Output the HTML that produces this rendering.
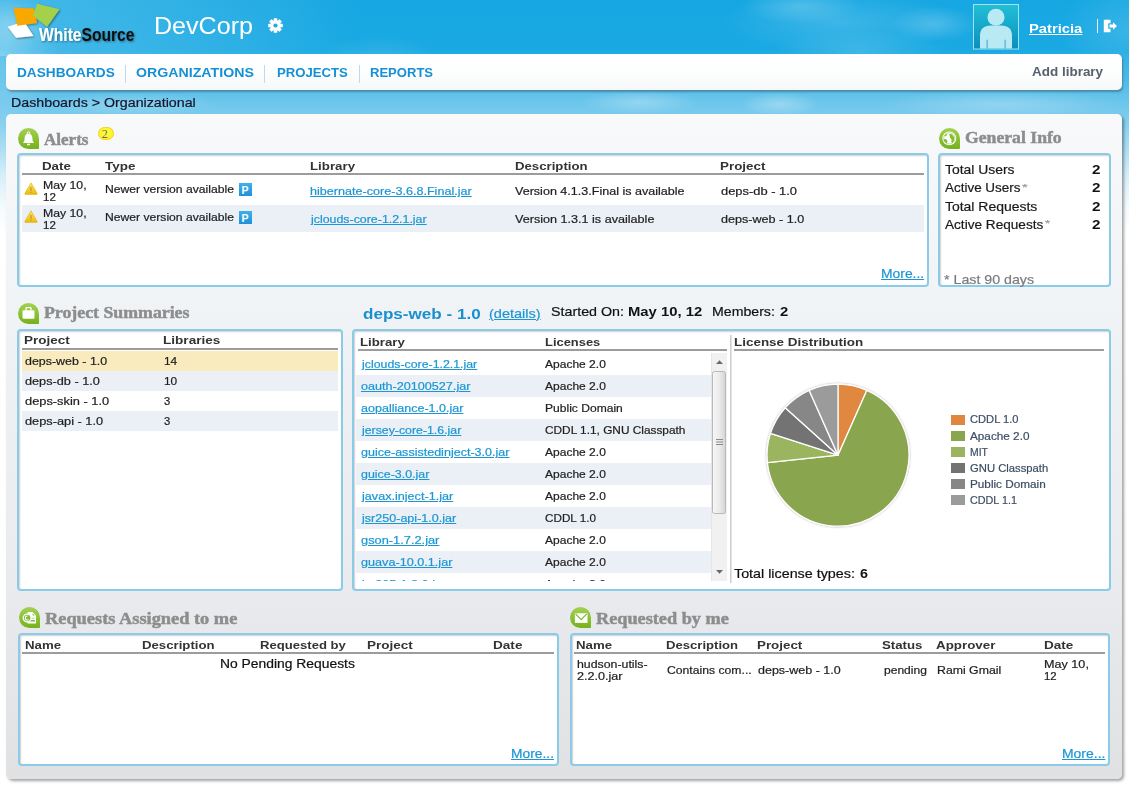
<!DOCTYPE html>
<html><head><meta charset="utf-8">
<style>
html,body{margin:0;padding:0;}
body{width:1129px;height:788px;overflow:hidden;position:relative;background:#fff;font-family:"Liberation Sans",sans-serif;}
#sky{position:absolute;left:0;top:0;width:1129px;height:260px;
 background:
  radial-gradient(ellipse 120px 32px at 840px 22px, rgba(255,255,255,.16), rgba(255,255,255,0) 100%),
  radial-gradient(ellipse 60px 18px at 800px 6px, rgba(255,255,255,.2), rgba(255,255,255,0) 100%),
  radial-gradient(ellipse 45px 18px at 935px 24px, rgba(255,255,255,.2), rgba(255,255,255,0) 100%),
  radial-gradient(ellipse 90px 22px at 860px 52px, rgba(255,255,255,.14), rgba(255,255,255,0) 100%),
  radial-gradient(ellipse 70px 50px at 1129px 30px, rgba(255,255,255,.14), rgba(255,255,255,0) 100%),
  radial-gradient(ellipse 60px 70px at 0px 55px, rgba(255,255,255,.3), rgba(255,255,255,0) 100%),
  radial-gradient(ellipse 40px 25px at 10px 25px, rgba(255,255,255,.2), rgba(255,255,255,0) 100%),
  radial-gradient(ellipse 60px 25px at 380px 60px, rgba(255,255,255,.12), rgba(255,255,255,0) 100%),
  radial-gradient(ellipse 90px 12px at 130px 104px, rgba(255,255,255,.22), rgba(255,255,255,0) 100%),
  radial-gradient(ellipse 60px 12px at 640px 102px, rgba(255,255,255,.28), rgba(255,255,255,0) 100%),
  radial-gradient(ellipse 40px 12px at 780px 104px, rgba(255,255,255,.3), rgba(255,255,255,0) 100%),
  radial-gradient(ellipse 120px 14px at 1000px 104px, rgba(255,255,255,.25), rgba(255,255,255,0) 100%),
  linear-gradient(to bottom,#16a7e2 0px,#1aa9e3 50px,#3db5e6 70px,#5ec0ea 92px,#7acbed 114px,#a6dcf2 145px,#d6eef9 175px,#f3fafd 205px,#ffffff 235px);}
.t{position:absolute;white-space:nowrap;transform-origin:0 0;}
.r{position:absolute;}
#panel{position:absolute;left:6px;top:114px;width:1116px;height:665px;border-radius:5px;
 background:linear-gradient(to bottom,#f7f9fa 0%,#eff2f5 35%,#e9ebee 70%,#e0e1e3 100%);
 box-shadow:2px 2px 3px rgba(0,0,0,.36);}
.box{position:absolute;box-sizing:border-box;border:2px solid #8acbe8;border-radius:4px;background:#fff;
 box-shadow:inset 1px 1px 1.5px rgba(90,60,60,.25);}
#nav{position:absolute;left:6px;top:54px;width:1116px;height:36px;border-radius:5px;
 background:linear-gradient(to bottom,#ffffff 0%,#fcfdfd 60%,#f5f7f9 100%);box-shadow:1px 2px 2px rgba(40,40,40,.35);}
.sep{position:absolute;top:65px;width:1px;height:18px;background:#b9dcef;}
.icon{position:absolute;width:21px;height:21px;border-radius:10.5px 10.5px 1px 10.5px;
 background:linear-gradient(to bottom,#a3d152 0%,#8cc236 50%,#76b11c 100%);}
.icon svg{position:absolute;left:0;top:0;}
</style></head><body>
<div id="sky"></div>
<div style="position:absolute;left:0;top:0;width:1129px;height:56px;background:linear-gradient(to right,rgba(255,255,255,.2) 0px,rgba(255,255,255,.13) 150px,rgba(255,255,255,.07) 260px,rgba(255,255,255,0) 360px)"></div>

<!-- logo -->
<svg style="position:absolute;left:0;top:0" width="150" height="50">
 <defs><filter id="sh" x="-20%" y="-20%" width="140%" height="140%"><feGaussianBlur in="SourceAlpha" stdDeviation="1"/><feOffset dx="1" dy="1"/><feComponentTransfer><feFuncA type="linear" slope=".45"/></feComponentTransfer><feMerge><feMergeNode/><feMergeNode in="SourceGraphic"/></feMerge></filter></defs>
 <g filter="url(#sh)">
 <polygon points="7.7,26.7 24,21.5 33.5,36 16.1,37.8" fill="#ffffff"/>
 <polygon points="13.4,7.7 34.1,8.4 37,22.9 17.4,25.8" fill="#f9a800"/>
 <polygon points="37.2,3.7 59.5,9.3 47.1,26.7 32.9,15.5" fill="#a6d04a"/>
 <text x="39" y="41" font-family="Liberation Sans" font-size="17.5" font-weight="700" textLength="95.5" lengthAdjust="spacingAndGlyphs"><tspan fill="#ffffff">White</tspan><tspan fill="#111111">Source</tspan></text>
 </g>
</svg>

<!-- gear -->
<svg style="position:absolute;left:267px;top:17px" width="17" height="17" viewBox="0 0 17 17">
 <g transform="translate(8.5,8.5)" fill="#fff">
  <circle r="5.2"/>
  <rect x="-1.8" y="-7.3" width="3.6" height="14.6" rx=".6"/>
  <rect x="-1.8" y="-7.3" width="3.6" height="14.6" rx=".6" transform="rotate(45)"/>
  <rect x="-1.8" y="-7.3" width="3.6" height="14.6" rx=".6" transform="rotate(90)"/>
  <rect x="-1.8" y="-7.3" width="3.6" height="14.6" rx=".6" transform="rotate(135)"/>
  <circle r="2.1" fill="#28a6e0"/>
 </g>
</svg>

<!-- avatar -->
<svg style="position:absolute;left:973px;top:4px" width="46" height="46" viewBox="0 0 46 46">
 <defs><linearGradient id="av" x1="0" y1="0" x2="0" y2="1"><stop offset="0" stop-color="#22bfd6"/><stop offset="1" stop-color="#0b8ebd"/></linearGradient></defs>
 <rect x="0.5" y="0.5" width="45" height="44.5" fill="url(#av)" stroke="#9fe3f0" stroke-width="1"/>
 <circle cx="23" cy="13.2" r="8.5" fill="#b9eaf4"/>
 <path d="M7,44.5 L7,32 Q7,21.5 18,21.5 L28,21.5 Q39,21.5 39,32 L39,44.5 Z" fill="#b9eaf4"/>
 <rect x="13.6" y="35.7" width="1" height="8.8" fill="#3aa7c4"/>
 <rect x="31.6" y="35.7" width="1" height="8.8" fill="#3aa7c4"/>
</svg>
<div class="r" style="left:1097px;top:19px;width:1px;height:14px;background:rgba(255,255,255,.85)"></div>
<!-- logout -->
<svg style="position:absolute;left:1103px;top:19px" width="15" height="14" viewBox="0 0 15 14">
 <path d="M0.8,0.8 L7.5,0.8 L7.5,4.2 L5.2,4.2 L5.2,9.8 L7.5,9.8 L7.5,13.2 L0.8,13.2 Z" fill="#fff"/>
 <path d="M6.5,5.6 L10,5.6 L10,3.2 L14,7 L10,10.8 L10,8.4 L6.5,8.4 Z" fill="#fff"/>
</svg>

<div id="nav"></div>
<div class="sep" style="left:125px"></div>
<div class="sep" style="left:264px"></div>
<div class="sep" style="left:359px"></div>

<div id="panel"></div>
<div class="box" style="left:17px;top:153.3px;width:912px;height:133.89999999999998px"></div>
<div class="box" style="left:937.6px;top:153.3px;width:173.69999999999993px;height:133.89999999999998px"></div>
<div class="box" style="left:17.3px;top:329px;width:325.7px;height:261.5px"></div>
<div class="box" style="left:351.7px;top:329px;width:759.5px;height:261.5px"></div>
<div class="box" style="left:18px;top:632.7px;width:540.8px;height:133.0px"></div>
<div class="box" style="left:569.7px;top:632.7px;width:540.5px;height:133.0px"></div>
<div class="r" style="left:22px;top:173px;width:902px;height:2px;background:#9a9ca0;"></div>
<div class="r" style="left:22px;top:204.5px;width:902px;height:27.5px;background:#ebf0f6;"></div>
<div class="r" style="left:22px;top:348px;width:316px;height:2px;background:#9a9ca0;"></div>
<div class="r" style="left:22px;top:351px;width:316px;height:20px;background:#f9ebbe;"></div>
<div class="r" style="left:22px;top:371px;width:316px;height:20px;background:#ebf0f6;"></div>
<div class="r" style="left:22px;top:411px;width:316px;height:20px;background:#ebf0f6;"></div>
<div class="r" style="left:357.5px;top:349px;width:369.5px;height:2px;background:#9a9ca0;"></div>
<div class="r" style="left:356px;top:375px;width:355px;height:22px;background:#ebf0f6;"></div>
<div class="r" style="left:356px;top:419px;width:355px;height:22px;background:#ebf0f6;"></div>
<div class="r" style="left:356px;top:463px;width:355px;height:22px;background:#ebf0f6;"></div>
<div class="r" style="left:356px;top:507px;width:355px;height:22px;background:#ebf0f6;"></div>
<div class="r" style="left:356px;top:551px;width:355px;height:22px;background:#ebf0f6;"></div>
<div class="r" style="left:734px;top:348.5px;width:370px;height:2.0px;background:#9a9ca0;"></div>
<div class="r" style="left:730px;top:335px;width:2px;height:248px;background:#e2e2e2;border-left:1px solid #cfcfcf;box-sizing:border-box"></div>
<div class="r" style="left:22px;top:652px;width:532px;height:2px;background:#9a9ca0;"></div>
<div class="r" style="left:574px;top:652px;width:531px;height:2px;background:#9a9ca0;"></div>

<!-- section icons -->
<div class="icon" style="left:18px;top:127.5px">
 <svg width="21" height="21" viewBox="0 0 21 21"><circle cx="10.5" cy="5.2" r="1.3" fill="none" stroke="#fff" stroke-width="1"/><path d="M10.5,5.8 Q14.3,6 14.4,10 L14.6,12.8 L16,15 L5,15 L6.4,12.8 L6.6,10 Q6.7,6 10.5,5.8 Z" fill="#fff"/><ellipse cx="10.5" cy="16.4" rx="1.6" ry="0.9" fill="#fff"/></svg>
</div>
<div class="icon" style="left:938.5px;top:127.5px">
 <svg width="21" height="21" viewBox="0 0 21 21"><circle cx="10.3" cy="10.4" r="6.9" fill="#fff"/><circle cx="10.3" cy="10.4" r="5.6" fill="none" stroke="#9ccf5a" stroke-width=".7"/><path d="M10.2,5.9 L12.8,6.2 L15.2,9.2 L15,12.4 L13.4,15 L12.2,14 L12.6,11.6 L11.2,10.1 L10.7,8 Z" fill="#83bd2c"/><path d="M4.9,11.2 L7,11 L8.4,13 L8.1,15.3 L6.2,14.6 L4.9,12.6 Z" fill="#83bd2c"/><path d="M5.4,7.6 L7.6,5.5 L8.1,6.7 L6.5,8.6 Z" fill="#8fc43a"/></svg>
</div>
<div class="icon" style="left:17.5px;top:302.5px">
 <svg width="21" height="21" viewBox="0 0 21 21"><rect x="4.5" y="7.2" width="12" height="8.5" rx="1" fill="#fff"/><path d="M8,7.4 L8,5.3 Q8,4.6 8.7,4.6 L12.3,4.6 Q13,4.6 13,5.3 L13,7.4" fill="none" stroke="#fff" stroke-width="1.3"/></svg>
</div>
<div class="icon" style="left:18.5px;top:606.5px">
 <svg width="21" height="21" viewBox="0 0 21 21"><path d="M8.5,5 L13.5,5 L17,8.5 L17,16.5 L8.5,16.5 Z" fill="#fff"/><path d="M13.6,6.2 L15.8,8.4 L13.6,8.4 Z" fill="#7dbb38"/><rect x="11" y="10.8" width="4.5" height="1" fill="#a5d27a"/><rect x="10.5" y="13" width="5.5" height="1.5" fill="#7dbb38"/><circle cx="8.2" cy="11" r="3.9" fill="#7dbb38" stroke="#fff" stroke-width="1.4"/><path d="M8.6,9 A2,2 0 1 0 9.6,12.6" fill="none" stroke="#fff" stroke-width="1.1"/></svg>
</div>
<div class="icon" style="left:570px;top:606.5px">
 <svg width="21" height="21" viewBox="0 0 21 21"><rect x="4.9" y="6.3" width="12.6" height="9.6" fill="#fff"/><path d="M5.6,6.9 L11.2,12.6 L16.8,6.9" fill="none" stroke="#7dbb38" stroke-width="1.3"/></svg>
</div>

<!-- badge -->
<div class="r" style="left:97.5px;top:127px;width:16.5px;height:13px;border-radius:8px;box-sizing:border-box;background:radial-gradient(ellipse at 50% 40%,#ffff40 0%,#fdf22a 70%,#f2d518 100%);border:1px solid #f0d31a;"></div>
<span class="t" style="left:101.8px;top:126.5px;font-size:12px;line-height:14px;color:#6d6a55;font-family:'Liberation Serif',serif;">2</span>

<!-- warning icons -->
<svg style="position:absolute;left:24px;top:182px" width="14" height="13" viewBox="0 0 14 13"><defs><linearGradient id="wg" x1="0" y1="0" x2="0" y2="1"><stop offset="0" stop-color="#fbe46a"/><stop offset=".6" stop-color="#f5cc2a"/><stop offset="1" stop-color="#ebb913"/></linearGradient></defs><path d="M7,0.8 L13.2,11.6 Q13.4,12.4 12.6,12.4 L1.4,12.4 Q0.6,12.4 0.8,11.6 Z" fill="url(#wg)" stroke="#e2b10c" stroke-width=".6"/><rect x="6.4" y="5" width="1.2" height="4" fill="#b59a40"/><rect x="6.4" y="9.8" width="1.2" height="1.1" fill="#b59a40"/></svg>
<svg style="position:absolute;left:24px;top:210px" width="14" height="13" viewBox="0 0 14 13"><path d="M7,0.8 L13.2,11.6 Q13.4,12.4 12.6,12.4 L1.4,12.4 Q0.6,12.4 0.8,11.6 Z" fill="url(#wg)" stroke="#e2b10c" stroke-width=".6"/><rect x="6.4" y="5" width="1.2" height="4" fill="#b59a40"/><rect x="6.4" y="9.8" width="1.2" height="1.1" fill="#b59a40"/></svg>

<!-- P badges -->
<div class="r" style="left:238.5px;top:183px;width:13px;height:12.5px;background:linear-gradient(#3eb0ec,#1e92d8);"></div>
<span class="t" style="left:241.6px;top:183.5px;font-size:10.5px;line-height:12px;color:#fff;font-weight:700;">P</span>
<div class="r" style="left:238.5px;top:211px;width:13px;height:12.5px;background:linear-gradient(#3eb0ec,#1e92d8);"></div>
<span class="t" style="left:241.6px;top:211.5px;font-size:10.5px;line-height:12px;color:#fff;font-weight:700;">P</span>

<!-- general info asterisks -->

<!-- scrollbar -->
<div class="r" style="left:711px;top:353px;width:16px;height:228px;background:#f1f1f1;border-left:1px solid #e6e6e6;box-sizing:border-box"></div>
<svg style="position:absolute;left:711px;top:353px" width="16" height="228" viewBox="0 0 16 228">
 <path d="M5,11 L8.5,7.3 L12,11 Z" fill="#6a6a6a"/>
 <path d="M5,217 L8.5,220.7 L12,217 Z" fill="#6a6a6a"/>
 <defs><linearGradient id="th" x1="0" y1="0" x2="1" y2="0"><stop offset="0" stop-color="#f7f7f7"/><stop offset=".5" stop-color="#ececec"/><stop offset="1" stop-color="#d4d4d8"/></linearGradient></defs>
 <rect x="1.5" y="18.5" width="13" height="142" rx="2" fill="url(#th)" stroke="#b9b9bb"/>
 <rect x="5" y="86" width="7" height="1" fill="#8a8a8a"/>
 <rect x="5" y="88.5" width="7" height="1" fill="#8a8a8a"/>
 <rect x="5" y="91" width="7" height="1" fill="#8a8a8a"/>
</svg>

<!-- pie -->
<svg style="position:absolute;left:0;top:0" width="1129" height="788">
 <defs><filter id="psh" x="-10%" y="-10%" width="120%" height="120%"><feGaussianBlur in="SourceAlpha" stdDeviation="0.8"/><feComponentTransfer><feFuncA type="linear" slope=".35"/></feComponentTransfer><feMerge><feMergeNode/><feMergeNode in="SourceGraphic"/></feMerge></filter></defs>
 <g filter="url(#psh)">
<path d="M838,455.2 L838.00,384.20 A71,71 0 0 1 866.88,390.34 Z" fill="#e0873f" stroke="#fff" stroke-width="1.3" stroke-linejoin="round"/>
<path d="M838,455.2 L866.88,390.34 A71,71 0 1 1 767.39,462.62 Z" fill="#89a54d" stroke="#fff" stroke-width="1.3" stroke-linejoin="round"/>
<path d="M838,455.2 L767.39,462.62 A71,71 0 0 1 770.47,433.26 Z" fill="#9ab460" stroke="#fff" stroke-width="1.3" stroke-linejoin="round"/>
<path d="M838,455.2 L770.47,433.26 A71,71 0 0 1 785.24,407.69 Z" fill="#737373" stroke="#fff" stroke-width="1.3" stroke-linejoin="round"/>
<path d="M838,455.2 L785.24,407.69 A71,71 0 0 1 809.12,390.34 Z" fill="#878787" stroke="#fff" stroke-width="1.3" stroke-linejoin="round"/>
<path d="M838,455.2 L809.12,390.34 A71,71 0 0 1 838.00,384.20 Z" fill="#9b9b9b" stroke="#fff" stroke-width="1.3" stroke-linejoin="round"/>
 </g>
</svg>
<!-- legend swatches -->
<div class="r" style="left:951px;top:415px;width:14px;height:10px;background:#e0873f"></div>
<div class="r" style="left:951px;top:431px;width:14px;height:10px;background:#89a54d"></div>
<div class="r" style="left:951px;top:447px;width:14px;height:10px;background:#9ab460"></div>
<div class="r" style="left:951px;top:463px;width:14px;height:10px;background:#737373"></div>
<div class="r" style="left:951px;top:479px;width:14px;height:10px;background:#878787"></div>
<div class="r" style="left:951px;top:495px;width:14px;height:10px;background:#9b9b9b"></div>

<span id="devcorp" class="t" style="left:153.91px;top:15.23px;font-size:23px;line-height:23px;font-weight:400;color:#fff;font-family:'Liberation Sans', sans-serif;letter-spacing:0.000px;transform:scaleX(1.0904);">DevCorp</span>
<span id="patricia" class="t" style="left:1028.60px;top:21.60px;font-size:13px;line-height:13px;font-weight:700;color:#fff;font-family:'Liberation Sans', sans-serif;letter-spacing:0.000px;transform:scaleX(1.1353);text-decoration:underline;">Patricia</span>
<span id="nav1" class="t" style="left:16.60px;top:66.00px;font-size:13px;line-height:13px;font-weight:700;color:#1590d6;font-family:'Liberation Sans', sans-serif;letter-spacing:0.000px;transform:scaleX(1.0492);">DASHBOARDS</span>
<span id="nav2" class="t" style="left:136.20px;top:66.00px;font-size:13px;line-height:13px;font-weight:700;color:#1590d6;font-family:'Liberation Sans', sans-serif;letter-spacing:0.000px;transform:scaleX(1.0902);">ORGANIZATIONS</span>
<span id="nav3" class="t" style="left:276.60px;top:66.00px;font-size:13px;line-height:13px;font-weight:700;color:#1590d6;font-family:'Liberation Sans', sans-serif;letter-spacing:0.000px;transform:scaleX(1.0114);">PROJECTS</span>
<span id="nav4" class="t" style="left:370.00px;top:66.00px;font-size:13px;line-height:13px;font-weight:700;color:#1590d6;font-family:'Liberation Sans', sans-serif;letter-spacing:0.000px;transform:scaleX(1.0036);">REPORTS</span>
<span id="addlib" class="t" style="left:1031.60px;top:65.40px;font-size:13px;line-height:13px;font-weight:700;color:#56606e;font-family:'Liberation Sans', sans-serif;letter-spacing:0.000px;transform:scaleX(1.0361);">Add library</span>
<span id="crumb" class="t" style="left:11.10px;top:95.90px;font-size:13px;line-height:13px;font-weight:400;color:#15152a;font-family:'Liberation Sans', sans-serif;letter-spacing:0.000px;transform:scaleX(1.0950);-webkit-text-stroke:0.2px #15152a;">Dashboards &gt; Organizational</span>
<span id="t_alerts" class="t" style="left:44.30px;top:132.20px;font-size:16px;line-height:16px;font-weight:700;color:#8d8d8d;font-family:'Liberation Serif', serif;letter-spacing:0.000px;transform:scaleX(1.0643);-webkit-text-stroke:0.45px #8d8d8d;">Alerts</span>
<span id="t_gen" class="t" style="left:965.00px;top:130.10px;font-size:16px;line-height:16px;font-weight:700;color:#8d8d8d;font-family:'Liberation Serif', serif;letter-spacing:0.000px;transform:scaleX(1.1046);-webkit-text-stroke:0.45px #8d8d8d;">General Info</span>
<span id="t_proj" class="t" style="left:44.00px;top:305.10px;font-size:16px;line-height:16px;font-weight:700;color:#8d8d8d;font-family:'Liberation Serif', serif;letter-spacing:0.000px;transform:scaleX(1.1122);-webkit-text-stroke:0.45px #8d8d8d;">Project Summaries</span>
<span id="t_req1" class="t" style="left:45.40px;top:611.00px;font-size:16px;line-height:16px;font-weight:700;color:#8d8d8d;font-family:'Liberation Serif', serif;letter-spacing:0.000px;transform:scaleX(1.1477);-webkit-text-stroke:0.45px #8d8d8d;">Requests Assigned to me</span>
<span id="t_req2" class="t" style="left:596.40px;top:611.00px;font-size:16px;line-height:16px;font-weight:700;color:#8d8d8d;font-family:'Liberation Serif', serif;letter-spacing:0.000px;transform:scaleX(1.1407);-webkit-text-stroke:0.45px #8d8d8d;">Requested by me</span>
<span id="a_h1" class="t" style="left:41.80px;top:161.09px;font-size:11px;line-height:11px;font-weight:700;color:#333;font-family:'Liberation Sans', sans-serif;letter-spacing:0.000px;transform:scaleX(1.2097);">Date</span>
<span id="a_h2" class="t" style="left:104.70px;top:161.09px;font-size:11px;line-height:11px;font-weight:700;color:#333;font-family:'Liberation Sans', sans-serif;letter-spacing:0.000px;transform:scaleX(1.2247);">Type</span>
<span id="a_h3" class="t" style="left:309.60px;top:161.09px;font-size:11px;line-height:11px;font-weight:700;color:#333;font-family:'Liberation Sans', sans-serif;letter-spacing:0.000px;transform:scaleX(1.2076);">Library</span>
<span id="a_h4" class="t" style="left:514.80px;top:161.09px;font-size:11px;line-height:11px;font-weight:700;color:#333;font-family:'Liberation Sans', sans-serif;letter-spacing:0.000px;transform:scaleX(1.1992);">Description</span>
<span id="a_h5" class="t" style="left:719.90px;top:161.09px;font-size:11px;line-height:11px;font-weight:700;color:#333;font-family:'Liberation Sans', sans-serif;letter-spacing:0.000px;transform:scaleX(1.2172);">Project</span>
<span id="a0_d1" class="t" style="left:42.50px;top:180.11px;font-size:10.5px;line-height:10.5px;font-weight:400;color:#1e1e1e;font-family:'Liberation Sans', sans-serif;letter-spacing:0.000px;transform:scaleX(1.1665);-webkit-text-stroke:0.2px #1e1e1e;">May 10,</span>
<span id="a0_d2" class="t" style="left:42.50px;top:191.81px;font-size:10.5px;line-height:10.5px;font-weight:400;color:#1e1e1e;font-family:'Liberation Sans', sans-serif;letter-spacing:0.000px;transform:scaleX(1.0980);-webkit-text-stroke:0.2px #1e1e1e;">12</span>
<span id="a0_t" class="t" style="left:104.70px;top:184.31px;font-size:10.5px;line-height:10.5px;font-weight:400;color:#1e1e1e;font-family:'Liberation Sans', sans-serif;letter-spacing:0.000px;transform:scaleX(1.1565);-webkit-text-stroke:0.2px #1e1e1e;">Newer version available</span>
<span id="a0_l" class="t" style="left:310.00px;top:186.11px;font-size:10.5px;line-height:10.5px;font-weight:400;color:#1a96d4;font-family:'Liberation Sans', sans-serif;letter-spacing:0.000px;transform:scaleX(1.1994);text-decoration:underline;-webkit-text-stroke:0.2px #1a96d4;">hibernate-core-3.6.8.Final.jar</span>
<span id="a0_de" class="t" style="left:515.40px;top:186.31px;font-size:10.5px;line-height:10.5px;font-weight:400;color:#1e1e1e;font-family:'Liberation Sans', sans-serif;letter-spacing:0.000px;transform:scaleX(1.1958);-webkit-text-stroke:0.2px #1e1e1e;">Version 4.1.3.Final is available</span>
<span id="a0_p" class="t" style="left:720.50px;top:186.31px;font-size:10.5px;line-height:10.5px;font-weight:400;color:#1e1e1e;font-family:'Liberation Sans', sans-serif;letter-spacing:0.000px;transform:scaleX(1.2284);-webkit-text-stroke:0.2px #1e1e1e;">deps-db - 1.0</span>
<span id="a1_d1" class="t" style="left:42.50px;top:208.01px;font-size:10.5px;line-height:10.5px;font-weight:400;color:#1e1e1e;font-family:'Liberation Sans', sans-serif;letter-spacing:0.000px;transform:scaleX(1.1665);-webkit-text-stroke:0.2px #1e1e1e;">May 10,</span>
<span id="a1_d2" class="t" style="left:42.50px;top:219.71px;font-size:10.5px;line-height:10.5px;font-weight:400;color:#1e1e1e;font-family:'Liberation Sans', sans-serif;letter-spacing:0.000px;transform:scaleX(1.0980);-webkit-text-stroke:0.2px #1e1e1e;">12</span>
<span id="a1_t" class="t" style="left:104.70px;top:212.01px;font-size:10.5px;line-height:10.5px;font-weight:400;color:#1e1e1e;font-family:'Liberation Sans', sans-serif;letter-spacing:0.000px;transform:scaleX(1.1565);-webkit-text-stroke:0.2px #1e1e1e;">Newer version available</span>
<span id="a1_l" class="t" style="left:311.18px;top:213.81px;font-size:10.5px;line-height:10.5px;font-weight:400;color:#1a96d4;font-family:'Liberation Sans', sans-serif;letter-spacing:0.000px;transform:scaleX(1.1794);text-decoration:underline;-webkit-text-stroke:0.2px #1a96d4;">jclouds-core-1.2.1.jar</span>
<span id="a1_de" class="t" style="left:515.40px;top:214.01px;font-size:10.5px;line-height:10.5px;font-weight:400;color:#1e1e1e;font-family:'Liberation Sans', sans-serif;letter-spacing:0.000px;transform:scaleX(1.2002);-webkit-text-stroke:0.2px #1e1e1e;">Version 1.3.1 is available</span>
<span id="a1_p" class="t" style="left:720.50px;top:214.01px;font-size:10.5px;line-height:10.5px;font-weight:400;color:#1e1e1e;font-family:'Liberation Sans', sans-serif;letter-spacing:0.000px;transform:scaleX(1.1995);-webkit-text-stroke:0.2px #1e1e1e;">deps-web - 1.0</span>
<span id="a_more" class="t" style="left:881.00px;top:268.34px;font-size:12px;line-height:12px;font-weight:400;color:#1a96d4;font-family:'Liberation Sans', sans-serif;letter-spacing:0.000px;transform:scaleX(1.1565);text-decoration:underline;-webkit-text-stroke:0.2px #1a96d4;">More...</span>
<span id="g0" class="t" style="left:944.80px;top:162.60px;font-size:13px;line-height:13px;font-weight:400;color:#1a1a1a;font-family:'Liberation Sans', sans-serif;letter-spacing:0.000px;transform:scaleX(1.0699);-webkit-text-stroke:0.2px #1a1a1a;">Total Users</span>
<span id="g0v" class="t" style="left:1091.70px;top:162.60px;font-size:13px;line-height:13px;font-weight:700;color:#111;font-family:'Liberation Sans', sans-serif;letter-spacing:0.000px;transform:scaleX(1.1714);">2</span>
<span id="g1" class="t" style="left:944.80px;top:181.40px;font-size:13px;line-height:13px;font-weight:400;color:#1a1a1a;font-family:'Liberation Sans', sans-serif;letter-spacing:0.000px;transform:scaleX(1.0346);-webkit-text-stroke:0.2px #1a1a1a;">Active Users</span>
<span id="g1v" class="t" style="left:1091.70px;top:181.40px;font-size:13px;line-height:13px;font-weight:700;color:#111;font-family:'Liberation Sans', sans-serif;letter-spacing:0.000px;transform:scaleX(1.1714);">2</span>
<span id="g2" class="t" style="left:944.80px;top:200.10px;font-size:13px;line-height:13px;font-weight:400;color:#1a1a1a;font-family:'Liberation Sans', sans-serif;letter-spacing:0.000px;transform:scaleX(1.0729);-webkit-text-stroke:0.2px #1a1a1a;">Total Requests</span>
<span id="g2v" class="t" style="left:1091.70px;top:200.10px;font-size:13px;line-height:13px;font-weight:700;color:#111;font-family:'Liberation Sans', sans-serif;letter-spacing:0.000px;transform:scaleX(1.1714);">2</span>
<span id="g3" class="t" style="left:944.80px;top:217.90px;font-size:13px;line-height:13px;font-weight:400;color:#1a1a1a;font-family:'Liberation Sans', sans-serif;letter-spacing:0.000px;transform:scaleX(1.0462);-webkit-text-stroke:0.2px #1a1a1a;">Active Requests</span>
<span id="g3v" class="t" style="left:1091.70px;top:217.90px;font-size:13px;line-height:13px;font-weight:700;color:#111;font-family:'Liberation Sans', sans-serif;letter-spacing:0.000px;transform:scaleX(1.1714);">2</span>
<span id="g_last" class="t" style="left:943.80px;top:273.00px;font-size:13px;line-height:13px;font-weight:400;color:#7b7b7b;font-family:'Liberation Sans', sans-serif;letter-spacing:0.000px;transform:scaleX(1.0931);-webkit-text-stroke:0.2px #7b7b7b;">* Last 90 days</span>
<span id="g_ast1" class="t" style="left:1021.50px;top:182.88px;font-size:9px;line-height:9px;font-weight:400;color:#9a9a9a;font-family:'Liberation Sans', sans-serif;letter-spacing:0.000px;transform:scaleX(1.6250);-webkit-text-stroke:0.2px #9a9a9a;">*</span>
<span id="g_ast2" class="t" style="left:1045.20px;top:219.18px;font-size:9px;line-height:9px;font-weight:400;color:#9a9a9a;font-family:'Liberation Sans', sans-serif;letter-spacing:0.000px;transform:scaleX(1.4500);-webkit-text-stroke:0.2px #9a9a9a;">*</span>
<span id="p_h1" class="t" style="left:23.60px;top:335.39px;font-size:11px;line-height:11px;font-weight:700;color:#333;font-family:'Liberation Sans', sans-serif;letter-spacing:0.000px;transform:scaleX(1.2251);">Project</span>
<span id="p_h2" class="t" style="left:162.70px;top:335.39px;font-size:11px;line-height:11px;font-weight:700;color:#333;font-family:'Liberation Sans', sans-serif;letter-spacing:0.000px;transform:scaleX(1.2342);">Libraries</span>
<span id="p0n" class="t" style="left:24.70px;top:355.81px;font-size:10.5px;line-height:10.5px;font-weight:400;color:#1e1e1e;font-family:'Liberation Sans', sans-serif;letter-spacing:0.000px;transform:scaleX(1.1836);-webkit-text-stroke:0.2px #1e1e1e;">deps-web - 1.0</span>
<span id="p0l" class="t" style="left:163.60px;top:355.81px;font-size:10.5px;line-height:10.5px;font-weight:400;color:#1e1e1e;font-family:'Liberation Sans', sans-serif;letter-spacing:0.000px;transform:scaleX(1.1318);-webkit-text-stroke:0.2px #1e1e1e;">14</span>
<span id="p1n" class="t" style="left:24.70px;top:375.81px;font-size:10.5px;line-height:10.5px;font-weight:400;color:#1e1e1e;font-family:'Liberation Sans', sans-serif;letter-spacing:0.000px;transform:scaleX(1.2090);-webkit-text-stroke:0.2px #1e1e1e;">deps-db - 1.0</span>
<span id="p1l" class="t" style="left:163.60px;top:375.81px;font-size:10.5px;line-height:10.5px;font-weight:400;color:#1e1e1e;font-family:'Liberation Sans', sans-serif;letter-spacing:0.000px;transform:scaleX(1.1318);-webkit-text-stroke:0.2px #1e1e1e;">10</span>
<span id="p2n" class="t" style="left:24.70px;top:395.81px;font-size:10.5px;line-height:10.5px;font-weight:400;color:#1e1e1e;font-family:'Liberation Sans', sans-serif;letter-spacing:0.000px;transform:scaleX(1.2213);-webkit-text-stroke:0.2px #1e1e1e;">deps-skin - 1.0</span>
<span id="p2l" class="t" style="left:163.60px;top:395.81px;font-size:10.5px;line-height:10.5px;font-weight:400;color:#1e1e1e;font-family:'Liberation Sans', sans-serif;letter-spacing:0.000px;transform:scaleX(1.0667);-webkit-text-stroke:0.2px #1e1e1e;">3</span>
<span id="p3n" class="t" style="left:24.70px;top:415.81px;font-size:10.5px;line-height:10.5px;font-weight:400;color:#1e1e1e;font-family:'Liberation Sans', sans-serif;letter-spacing:0.000px;transform:scaleX(1.2165);-webkit-text-stroke:0.2px #1e1e1e;">deps-api - 1.0</span>
<span id="p3l" class="t" style="left:163.60px;top:415.81px;font-size:10.5px;line-height:10.5px;font-weight:400;color:#1e1e1e;font-family:'Liberation Sans', sans-serif;letter-spacing:0.000px;transform:scaleX(1.0667);-webkit-text-stroke:0.2px #1e1e1e;">3</span>
<span id="dw_title" class="t" style="left:362.70px;top:305.80px;font-size:15px;line-height:15px;font-weight:700;color:#1a8fd0;font-family:'Liberation Sans', sans-serif;letter-spacing:0.000px;transform:scaleX(1.1386);">deps-web - 1.0</span>
<span id="dw_details" class="t" style="left:489.40px;top:306.50px;font-size:13px;line-height:13px;font-weight:400;color:#1a96d4;font-family:'Liberation Sans', sans-serif;letter-spacing:0.000px;transform:scaleX(1.1175);text-decoration:underline;-webkit-text-stroke:0.2px #1a96d4;">(details)</span>
<span id="dw_started" class="t" style="left:550.70px;top:305.30px;font-size:13px;line-height:13px;font-weight:400;color:#111;font-family:'Liberation Sans', sans-serif;letter-spacing:0.000px;transform:scaleX(1.0977);-webkit-text-stroke:0.2px #111;">Started On:</span>
<span id="dw_date" class="t" style="left:628.30px;top:305.30px;font-size:13px;line-height:13px;font-weight:700;color:#111;font-family:'Liberation Sans', sans-serif;letter-spacing:0.000px;transform:scaleX(1.1402);">May 10, 12</span>
<span id="dw_members" class="t" style="left:712.31px;top:305.30px;font-size:13px;line-height:13px;font-weight:400;color:#111;font-family:'Liberation Sans', sans-serif;letter-spacing:0.000px;transform:scaleX(1.0876);-webkit-text-stroke:0.2px #111;">Members:</span>
<span id="dw_mem2" class="t" style="left:779.80px;top:305.30px;font-size:13px;line-height:13px;font-weight:700;color:#111;font-family:'Liberation Sans', sans-serif;letter-spacing:0.000px;transform:scaleX(1.1429);">2</span>
<span id="l_h1" class="t" style="left:360.20px;top:337.19px;font-size:11px;line-height:11px;font-weight:700;color:#333;font-family:'Liberation Sans', sans-serif;letter-spacing:0.000px;transform:scaleX(1.1998);">Library</span>
<span id="l_h2" class="t" style="left:544.50px;top:337.19px;font-size:11px;line-height:11px;font-weight:700;color:#333;font-family:'Liberation Sans', sans-serif;letter-spacing:0.000px;transform:scaleX(1.1732);">Licenses</span>
<span id="l0n" class="t" style="left:362.18px;top:359.11px;font-size:10.5px;line-height:10.5px;font-weight:400;color:#1a96d4;font-family:'Liberation Sans', sans-serif;letter-spacing:0.000px;transform:scaleX(1.1753);text-decoration:underline;-webkit-text-stroke:0.2px #1a96d4;">jclouds-core-1.2.1.jar</span>
<span id="l0c" class="t" style="left:545.00px;top:359.11px;font-size:10.5px;line-height:10.5px;font-weight:400;color:#1e1e1e;font-family:'Liberation Sans', sans-serif;letter-spacing:0.000px;transform:scaleX(1.1448);-webkit-text-stroke:0.2px #1e1e1e;">Apache 2.0</span>
<span id="l1n" class="t" style="left:361.00px;top:381.11px;font-size:10.5px;line-height:10.5px;font-weight:400;color:#1a96d4;font-family:'Liberation Sans', sans-serif;letter-spacing:0.000px;transform:scaleX(1.2012);text-decoration:underline;-webkit-text-stroke:0.2px #1a96d4;">oauth-20100527.jar</span>
<span id="l1c" class="t" style="left:545.00px;top:381.11px;font-size:10.5px;line-height:10.5px;font-weight:400;color:#1e1e1e;font-family:'Liberation Sans', sans-serif;letter-spacing:0.000px;transform:scaleX(1.1448);-webkit-text-stroke:0.2px #1e1e1e;">Apache 2.0</span>
<span id="l2n" class="t" style="left:361.00px;top:403.11px;font-size:10.5px;line-height:10.5px;font-weight:400;color:#1a96d4;font-family:'Liberation Sans', sans-serif;letter-spacing:0.000px;transform:scaleX(1.1934);text-decoration:underline;-webkit-text-stroke:0.2px #1a96d4;">aopalliance-1.0.jar</span>
<span id="l2c" class="t" style="left:545.00px;top:403.11px;font-size:10.5px;line-height:10.5px;font-weight:400;color:#1e1e1e;font-family:'Liberation Sans', sans-serif;letter-spacing:0.000px;transform:scaleX(1.1495);-webkit-text-stroke:0.2px #1e1e1e;">Public Domain</span>
<span id="l3n" class="t" style="left:362.17px;top:425.11px;font-size:10.5px;line-height:10.5px;font-weight:400;color:#1a96d4;font-family:'Liberation Sans', sans-serif;letter-spacing:0.000px;transform:scaleX(1.1729);text-decoration:underline;-webkit-text-stroke:0.2px #1a96d4;">jersey-core-1.6.jar</span>
<span id="l3c" class="t" style="left:545.00px;top:425.11px;font-size:10.5px;line-height:10.5px;font-weight:400;color:#1e1e1e;font-family:'Liberation Sans', sans-serif;letter-spacing:0.000px;transform:scaleX(1.1277);-webkit-text-stroke:0.2px #1e1e1e;">CDDL 1.1, GNU Classpath</span>
<span id="l4n" class="t" style="left:361.00px;top:447.11px;font-size:10.5px;line-height:10.5px;font-weight:400;color:#1a96d4;font-family:'Liberation Sans', sans-serif;letter-spacing:0.000px;transform:scaleX(1.1938);text-decoration:underline;-webkit-text-stroke:0.2px #1a96d4;">guice-assistedinject-3.0.jar</span>
<span id="l4c" class="t" style="left:545.00px;top:447.11px;font-size:10.5px;line-height:10.5px;font-weight:400;color:#1e1e1e;font-family:'Liberation Sans', sans-serif;letter-spacing:0.000px;transform:scaleX(1.1448);-webkit-text-stroke:0.2px #1e1e1e;">Apache 2.0</span>
<span id="l5n" class="t" style="left:361.00px;top:469.11px;font-size:10.5px;line-height:10.5px;font-weight:400;color:#1a96d4;font-family:'Liberation Sans', sans-serif;letter-spacing:0.000px;transform:scaleX(1.1839);text-decoration:underline;-webkit-text-stroke:0.2px #1a96d4;">guice-3.0.jar</span>
<span id="l5c" class="t" style="left:545.00px;top:469.11px;font-size:10.5px;line-height:10.5px;font-weight:400;color:#1e1e1e;font-family:'Liberation Sans', sans-serif;letter-spacing:0.000px;transform:scaleX(1.1448);-webkit-text-stroke:0.2px #1e1e1e;">Apache 2.0</span>
<span id="l6n" class="t" style="left:362.20px;top:491.11px;font-size:10.5px;line-height:10.5px;font-weight:400;color:#1a96d4;font-family:'Liberation Sans', sans-serif;letter-spacing:0.000px;transform:scaleX(1.2021);text-decoration:underline;-webkit-text-stroke:0.2px #1a96d4;">javax.inject-1.jar</span>
<span id="l6c" class="t" style="left:545.00px;top:491.11px;font-size:10.5px;line-height:10.5px;font-weight:400;color:#1e1e1e;font-family:'Liberation Sans', sans-serif;letter-spacing:0.000px;transform:scaleX(1.1448);-webkit-text-stroke:0.2px #1e1e1e;">Apache 2.0</span>
<span id="l7n" class="t" style="left:362.20px;top:513.11px;font-size:10.5px;line-height:10.5px;font-weight:400;color:#1a96d4;font-family:'Liberation Sans', sans-serif;letter-spacing:0.000px;transform:scaleX(1.1957);text-decoration:underline;-webkit-text-stroke:0.2px #1a96d4;">jsr250-api-1.0.jar</span>
<span id="l7c" class="t" style="left:545.00px;top:513.11px;font-size:10.5px;line-height:10.5px;font-weight:400;color:#1e1e1e;font-family:'Liberation Sans', sans-serif;letter-spacing:0.000px;transform:scaleX(1.1132);-webkit-text-stroke:0.2px #1e1e1e;">CDDL 1.0</span>
<span id="l8n" class="t" style="left:361.00px;top:535.11px;font-size:10.5px;line-height:10.5px;font-weight:400;color:#1a96d4;font-family:'Liberation Sans', sans-serif;letter-spacing:0.000px;transform:scaleX(1.2209);text-decoration:underline;-webkit-text-stroke:0.2px #1a96d4;">gson-1.7.2.jar</span>
<span id="l8c" class="t" style="left:545.00px;top:535.11px;font-size:10.5px;line-height:10.5px;font-weight:400;color:#1e1e1e;font-family:'Liberation Sans', sans-serif;letter-spacing:0.000px;transform:scaleX(1.1448);-webkit-text-stroke:0.2px #1e1e1e;">Apache 2.0</span>
<span id="l9n" class="t" style="left:361.00px;top:557.11px;font-size:10.5px;line-height:10.5px;font-weight:400;color:#1a96d4;font-family:'Liberation Sans', sans-serif;letter-spacing:0.000px;transform:scaleX(1.2044);text-decoration:underline;-webkit-text-stroke:0.2px #1a96d4;">guava-10.0.1.jar</span>
<span id="l9c" class="t" style="left:545.00px;top:557.11px;font-size:10.5px;line-height:10.5px;font-weight:400;color:#1e1e1e;font-family:'Liberation Sans', sans-serif;letter-spacing:0.000px;transform:scaleX(1.1448);-webkit-text-stroke:0.2px #1e1e1e;">Apache 2.0</span>
<span id="l10n" class="t" style="left:362.20px;top:579.11px;font-size:10.5px;line-height:10.5px;font-weight:400;color:#1a96d4;font-family:'Liberation Sans', sans-serif;letter-spacing:0.000px;transform:scaleX(1.2022);text-decoration:underline;-webkit-text-stroke:0.2px #1a96d4;clip-path:polygon(-10px -10px,1000px -10px,1000px 1.8px,-10px 1.8px);">jsr305-1.3.9.jar</span>
<span id="l10c" class="t" style="left:545.00px;top:579.11px;font-size:10.5px;line-height:10.5px;font-weight:400;color:#1e1e1e;font-family:'Liberation Sans', sans-serif;letter-spacing:0.000px;transform:scaleX(1.1448);-webkit-text-stroke:0.2px #1e1e1e;clip-path:polygon(-10px -10px,1000px -10px,1000px 1.8px,-10px 1.8px);">Apache 2.0</span>
<span id="ld_h" class="t" style="left:733.70px;top:337.19px;font-size:11px;line-height:11px;font-weight:700;color:#333;font-family:'Liberation Sans', sans-serif;letter-spacing:0.000px;transform:scaleX(1.2215);">License Distribution</span>
<span id="lg0" class="t" style="left:970.00px;top:414.49px;font-size:11px;line-height:11px;font-weight:400;color:#3d4d63;font-family:'Liberation Sans', sans-serif;letter-spacing:0.000px;transform:scaleX(1.0129);-webkit-text-stroke:0.2px #3d4d63;">CDDL 1.0</span>
<span id="lg1" class="t" style="left:970.00px;top:430.54px;font-size:11px;line-height:11px;font-weight:400;color:#3d4d63;font-family:'Liberation Sans', sans-serif;letter-spacing:0.000px;transform:scaleX(1.0677);-webkit-text-stroke:0.2px #3d4d63;">Apache 2.0</span>
<span id="lg2" class="t" style="left:970.00px;top:446.59px;font-size:11px;line-height:11px;font-weight:400;color:#3d4d63;font-family:'Liberation Sans', sans-serif;letter-spacing:0.000px;transform:scaleX(0.9418);-webkit-text-stroke:0.2px #3d4d63;">MIT</span>
<span id="lg3" class="t" style="left:970.00px;top:462.64px;font-size:11px;line-height:11px;font-weight:400;color:#3d4d63;font-family:'Liberation Sans', sans-serif;letter-spacing:0.000px;transform:scaleX(1.0236);-webkit-text-stroke:0.2px #3d4d63;">GNU Classpath</span>
<span id="lg4" class="t" style="left:970.00px;top:478.69px;font-size:11px;line-height:11px;font-weight:400;color:#3d4d63;font-family:'Liberation Sans', sans-serif;letter-spacing:0.000px;transform:scaleX(1.0678);-webkit-text-stroke:0.2px #3d4d63;">Public Domain</span>
<span id="lg5" class="t" style="left:970.00px;top:494.74px;font-size:11px;line-height:11px;font-weight:400;color:#3d4d63;font-family:'Liberation Sans', sans-serif;letter-spacing:0.000px;transform:scaleX(0.9797);-webkit-text-stroke:0.2px #3d4d63;">CDDL 1.1</span>
<span id="tlt" class="t" style="left:733.50px;top:566.50px;font-size:13px;line-height:13px;font-weight:400;color:#111;font-family:'Liberation Sans', sans-serif;letter-spacing:0.000px;transform:scaleX(1.1005);-webkit-text-stroke:0.2px #111;">Total license types:</span>
<span id="tlt6" class="t" style="left:859.60px;top:566.50px;font-size:13px;line-height:13px;font-weight:700;color:#111;font-family:'Liberation Sans', sans-serif;letter-spacing:0.000px;transform:scaleX(1.1000);">6</span>
<span id="r1h1" class="t" style="left:24.60px;top:640.19px;font-size:11px;line-height:11px;font-weight:700;color:#333;font-family:'Liberation Sans', sans-serif;letter-spacing:0.000px;transform:scaleX(1.2063);">Name</span>
<span id="r1h2" class="t" style="left:141.80px;top:640.19px;font-size:11px;line-height:11px;font-weight:700;color:#333;font-family:'Liberation Sans', sans-serif;letter-spacing:0.000px;transform:scaleX(1.1992);">Description</span>
<span id="r1h3" class="t" style="left:259.60px;top:640.19px;font-size:11px;line-height:11px;font-weight:700;color:#333;font-family:'Liberation Sans', sans-serif;letter-spacing:0.000px;transform:scaleX(1.1902);">Requested by</span>
<span id="r1h4" class="t" style="left:366.90px;top:640.19px;font-size:11px;line-height:11px;font-weight:700;color:#333;font-family:'Liberation Sans', sans-serif;letter-spacing:0.000px;transform:scaleX(1.2278);">Project</span>
<span id="r1h5" class="t" style="left:492.60px;top:640.19px;font-size:11px;line-height:11px;font-weight:700;color:#333;font-family:'Liberation Sans', sans-serif;letter-spacing:0.000px;transform:scaleX(1.2350);">Date</span>
<span id="r1none" class="t" style="left:219.99px;top:657.92px;font-size:12.5px;line-height:12.5px;font-weight:400;color:#111;font-family:'Liberation Sans', sans-serif;letter-spacing:0.000px;transform:scaleX(1.1092);-webkit-text-stroke:0.2px #111;">No Pending Requests</span>
<span id="r1more" class="t" style="left:511.20px;top:747.74px;font-size:12px;line-height:12px;font-weight:400;color:#1a96d4;font-family:'Liberation Sans', sans-serif;letter-spacing:0.000px;transform:scaleX(1.1511);text-decoration:underline;-webkit-text-stroke:0.2px #1a96d4;">More...</span>
<span id="r2h1" class="t" style="left:575.50px;top:640.19px;font-size:11px;line-height:11px;font-weight:700;color:#333;font-family:'Liberation Sans', sans-serif;letter-spacing:0.000px;transform:scaleX(1.2063);">Name</span>
<span id="r2h2" class="t" style="left:666.40px;top:640.19px;font-size:11px;line-height:11px;font-weight:700;color:#333;font-family:'Liberation Sans', sans-serif;letter-spacing:0.000px;transform:scaleX(1.1910);">Description</span>
<span id="r2h3" class="t" style="left:757.10px;top:640.19px;font-size:11px;line-height:11px;font-weight:700;color:#333;font-family:'Liberation Sans', sans-serif;letter-spacing:0.000px;transform:scaleX(1.2145);">Project</span>
<span id="r2h4" class="t" style="left:881.90px;top:640.19px;font-size:11px;line-height:11px;font-weight:700;color:#333;font-family:'Liberation Sans', sans-serif;letter-spacing:0.000px;transform:scaleX(1.2030);">Status</span>
<span id="r2h5" class="t" style="left:936.00px;top:640.19px;font-size:11px;line-height:11px;font-weight:700;color:#333;font-family:'Liberation Sans', sans-serif;letter-spacing:0.000px;transform:scaleX(1.2153);">Approver</span>
<span id="r2h6" class="t" style="left:1043.80px;top:640.19px;font-size:11px;line-height:11px;font-weight:700;color:#333;font-family:'Liberation Sans', sans-serif;letter-spacing:0.000px;transform:scaleX(1.2308);">Date</span>
<span id="r2n1" class="t" style="left:576.80px;top:658.81px;font-size:10.5px;line-height:10.5px;font-weight:400;color:#1e1e1e;font-family:'Liberation Sans', sans-serif;letter-spacing:0.000px;transform:scaleX(1.1746);-webkit-text-stroke:0.2px #1e1e1e;">hudson-utils-</span>
<span id="r2n2" class="t" style="left:576.80px;top:670.61px;font-size:10.5px;line-height:10.5px;font-weight:400;color:#1e1e1e;font-family:'Liberation Sans', sans-serif;letter-spacing:0.000px;transform:scaleX(1.1992);-webkit-text-stroke:0.2px #1e1e1e;">2.2.0.jar</span>
<span id="r2d" class="t" style="left:666.90px;top:665.11px;font-size:10.5px;line-height:10.5px;font-weight:400;color:#1e1e1e;font-family:'Liberation Sans', sans-serif;letter-spacing:0.000px;transform:scaleX(1.1606);-webkit-text-stroke:0.2px #1e1e1e;">Contains com...</span>
<span id="r2p" class="t" style="left:757.80px;top:665.11px;font-size:10.5px;line-height:10.5px;font-weight:400;color:#1e1e1e;font-family:'Liberation Sans', sans-serif;letter-spacing:0.000px;transform:scaleX(1.1908);-webkit-text-stroke:0.2px #1e1e1e;">deps-web - 1.0</span>
<span id="r2s" class="t" style="left:883.70px;top:665.11px;font-size:10.5px;line-height:10.5px;font-weight:400;color:#1e1e1e;font-family:'Liberation Sans', sans-serif;letter-spacing:0.000px;transform:scaleX(1.1484);-webkit-text-stroke:0.2px #1e1e1e;">pending</span>
<span id="r2a" class="t" style="left:937.20px;top:665.11px;font-size:10.5px;line-height:10.5px;font-weight:400;color:#1e1e1e;font-family:'Liberation Sans', sans-serif;letter-spacing:0.000px;transform:scaleX(1.1705);-webkit-text-stroke:0.2px #1e1e1e;">Rami Gmail</span>
<span id="r2dt1" class="t" style="left:1044.20px;top:659.11px;font-size:10.5px;line-height:10.5px;font-weight:400;color:#1e1e1e;font-family:'Liberation Sans', sans-serif;letter-spacing:0.000px;transform:scaleX(1.2022);-webkit-text-stroke:0.2px #1e1e1e;">May 10,</span>
<span id="r2dt2" class="t" style="left:1044.20px;top:671.11px;font-size:10.5px;line-height:10.5px;font-weight:400;color:#1e1e1e;font-family:'Liberation Sans', sans-serif;letter-spacing:0.000px;transform:scaleX(1.0811);-webkit-text-stroke:0.2px #1e1e1e;">12</span>
<span id="r2more" class="t" style="left:1062.00px;top:747.74px;font-size:12px;line-height:12px;font-weight:400;color:#1a96d4;font-family:'Liberation Sans', sans-serif;letter-spacing:0.000px;transform:scaleX(1.1619);text-decoration:underline;-webkit-text-stroke:0.2px #1a96d4;">More...</span>
</body></html>
